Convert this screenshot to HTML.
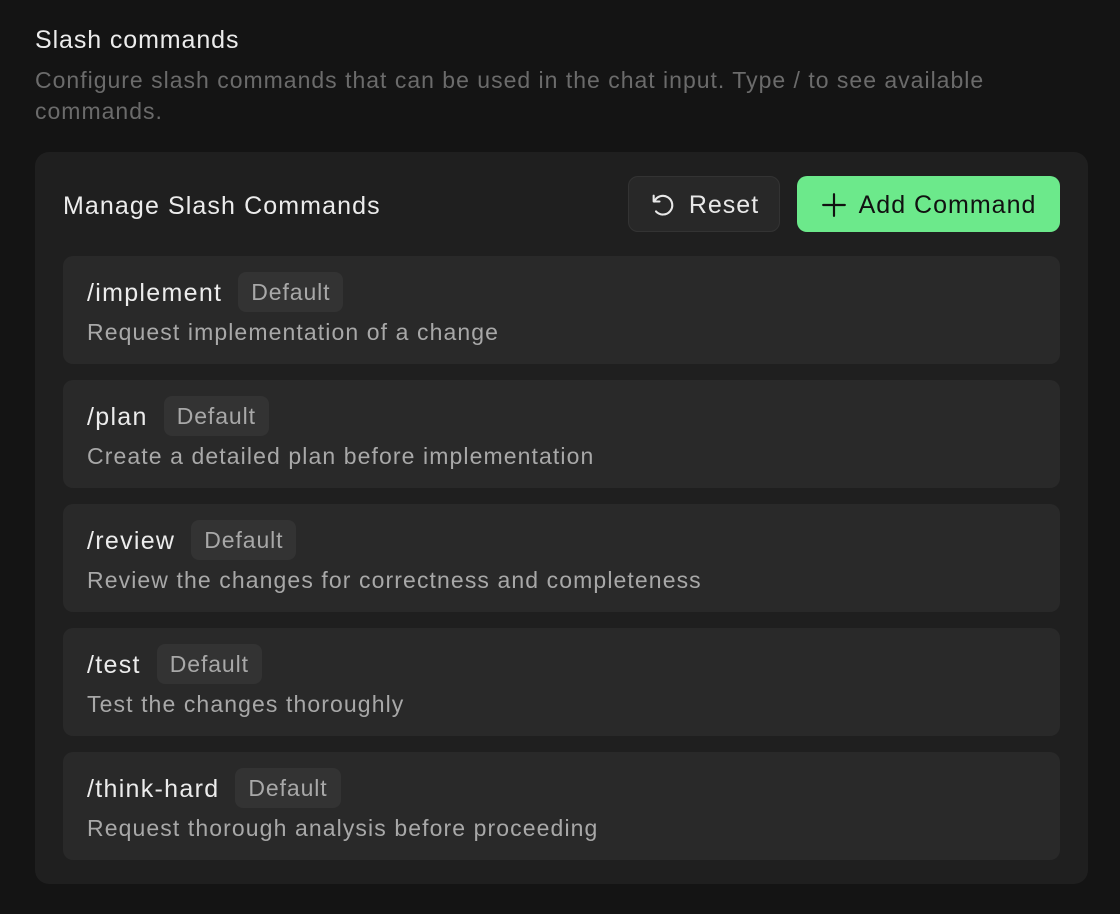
<!DOCTYPE html>
<html><head><style>
*{margin:0;padding:0;box-sizing:border-box}
body{width:1120px;height:914px;background:#141414;font-family:"Liberation Sans",sans-serif;overflow:hidden}
.t{position:absolute;left:35px;top:26px;font-size:25px;letter-spacing:0.9px;color:#ececec}
.d{position:absolute;left:35px;top:65px;width:1000px;font-size:23px;line-height:31px;color:#6b6b6b;letter-spacing:1px}
.card{position:absolute;left:35px;top:152px;width:1053px;height:732px;background:#1f1f1f;border-radius:14px}
.h{position:absolute;left:28px;top:40px;font-size:25px;letter-spacing:1.1px;color:#ececec}
.btn{position:absolute;top:24px;height:56px;border-radius:10px;font-size:25px;letter-spacing:1px;display:flex;align-items:center;justify-content:center;gap:12px;padding-top:2px}
.reset{left:593px;width:152px;background:#282828;border:1px solid #333;color:#e8e8e8}
.add{left:762px;width:263px;background:#6ce98b;color:#111}
.item{position:absolute;left:28px;width:997px;height:108px;background:#292929;border-radius:10px}
.n{position:absolute;left:24px;top:16px;height:40px;display:flex;align-items:center;font-size:25px;letter-spacing:1.3px;color:#ececec}
.n>i{font-style:normal;position:relative;top:1px}
.b{margin-left:16px;height:40px;padding:0 13px;background:#333;border-radius:8px;font-size:23px;letter-spacing:0.9px;color:#a8a8a8;display:flex;align-items:center}
.s{position:absolute;left:24px;top:63px;font-size:23px;color:#a8a8a8;letter-spacing:1.1px}
</style></head><body>
<div class="t">Slash commands</div>
<div class="d">Configure slash commands that can be used in the chat input. Type / to see available commands.</div>
<div class="card">
<div class="h">Manage Slash Commands</div>
<div class="btn reset"><svg width="28" height="28" viewBox="0 0 24 24" fill="none" stroke="#e8e8e8" stroke-width="1.8" stroke-linecap="round" stroke-linejoin="round"><path d="M4 4v5h5"/><path d="M4.6 9A8 8 0 1 1 6 17.5"/></svg>Reset</div>
<div class="btn add"><svg width="26" height="26" viewBox="0 0 24 24" stroke="#111" stroke-width="2" stroke-linecap="round"><path d="M12 2v20M2 12h20"/></svg>Add Command</div>
<div class="item" style="top:104px"><div class="n"><i>/implement</i><span class="b">Default</span></div><div class="s">Request implementation of a change</div></div>
<div class="item" style="top:228px"><div class="n"><i>/plan</i><span class="b">Default</span></div><div class="s">Create a detailed plan before implementation</div></div>
<div class="item" style="top:352px"><div class="n"><i>/review</i><span class="b">Default</span></div><div class="s">Review the changes for correctness and completeness</div></div>
<div class="item" style="top:476px"><div class="n"><i>/test</i><span class="b">Default</span></div><div class="s">Test the changes thoroughly</div></div>
<div class="item" style="top:600px"><div class="n"><i>/think-hard</i><span class="b">Default</span></div><div class="s">Request thorough analysis before proceeding</div></div>
</div>
</body></html>
